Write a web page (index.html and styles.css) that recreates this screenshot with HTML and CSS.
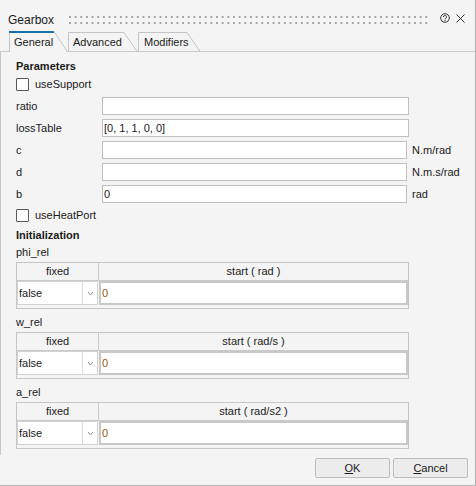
FILE: index.html
```html
<!DOCTYPE html>
<html>
<head>
<meta charset="utf-8">
<title>Gearbox</title>
<link rel="stylesheet" href="styles.css">
</head>
<body>
<div class="window">
  <div class="titlebar">
    <span class="title">Gearbox</span>
    <span class="grip"></span>
    <svg class="help" width="10" height="10" viewBox="0 0 10 10">
      <circle cx="5" cy="5" r="4.3" fill="none" stroke="#333" stroke-width="1"/>
      <path d="M3.5 4.1 A1.5 1.5 0 1 1 5.6 5.3 C5.1 5.6 5 5.9 5 6.4" fill="none" stroke="#333" stroke-width="1"/>
      <circle cx="5" cy="7.6" r="0.6" fill="#333"/>
    </svg>
    <svg class="close" width="9" height="9" viewBox="0 0 9 9">
      <path d="M0.5 0.5 L8.5 8.5 M8.5 0.5 L0.5 8.5" stroke="#333" stroke-width="1"/>
    </svg>
  </div>

  <div class="tabstrip">
    <span class="tab-gap"></span>
    <div class="tab tab-general">
      <svg class="tab-shape" width="59" height="21" viewBox="0 0 59 21">
        <path d="M0.5 21 V1" stroke="#c4c4c4" fill="none"/>
        <rect x="0" y="0" width="45" height="2" fill="#1570a8"/>
        <path d="M45 0.5 L58.5 21" stroke="#c4c4c4" fill="none"/>
      </svg>
      <span class="tab-label">General</span>
    </div>
    <div class="tab tab-advanced">
      <svg class="tab-shape" width="70" height="21" viewBox="0 0 70 21">
        <path d="M0 20.5 H70" stroke="#c8c8c8" fill="none"/>
        <path d="M0.5 21 V1.5 H56 L69.5 21" stroke="#c4c4c4" fill="none"/>
      </svg>
      <span class="tab-label">Advanced</span>
    </div>
    <div class="tab tab-modifiers">
      <svg class="tab-shape" width="63" height="21" viewBox="0 0 63 21">
        <path d="M0 20.5 H63" stroke="#c8c8c8" fill="none"/>
        <path d="M0.5 21 V1.5 H49 L62.5 21" stroke="#c4c4c4" fill="none"/>
      </svg>
      <span class="tab-label tab-label-m">Modifiers</span>
    </div>
    <span class="tab-fill"></span>
  </div>

  <div class="panel">
    <div class="section-title">Parameters</div>
    <div class="check-row"><span class="checkbox"></span><span>useSupport</span></div>

    <div class="params">
      <span class="param-label">ratio</span>
      <span class="param-input wide"></span>

      <span class="param-label">lossTable</span>
      <span class="param-input wide">[0, 1, 1, 0, 0]</span>

      <span class="param-label">c</span>
      <span class="param-input"></span>
      <span class="param-unit">N.m/rad</span>

      <span class="param-label">d</span>
      <span class="param-input"></span>
      <span class="param-unit">N.m.s/rad</span>

      <span class="param-label">b</span>
      <span class="param-input">0</span>
      <span class="param-unit">rad</span>
    </div>

    <div class="check-row check-heat"><span class="checkbox"></span><span>useHeatPort</span></div>

    <div class="section-title section-init">Initialization</div>

    <div class="init-label first">phi_rel</div>
    <div class="ptable">
      <div class="thead"><div class="th th-fixed">fixed</div><div class="th th-start">start ( rad )</div></div>
      <div class="trow">
        <div class="combo"><span class="combo-text">false</span><span class="combo-btn"><svg width="5" height="3" viewBox="0 0 5 3"><path d="M0 0 L2.5 3 L5 0" fill="none" stroke="#8c8c8c" stroke-width="1"/></svg></span></div>
        <div class="cell-input">0</div>
      </div>
    </div>

    <div class="init-label">w_rel</div>
    <div class="ptable">
      <div class="thead"><div class="th th-fixed">fixed</div><div class="th th-start">start ( rad/s )</div></div>
      <div class="trow">
        <div class="combo"><span class="combo-text">false</span><span class="combo-btn"><svg width="5" height="3" viewBox="0 0 5 3"><path d="M0 0 L2.5 3 L5 0" fill="none" stroke="#8c8c8c" stroke-width="1"/></svg></span></div>
        <div class="cell-input">0</div>
      </div>
    </div>

    <div class="init-label">a_rel</div>
    <div class="ptable">
      <div class="thead"><div class="th th-fixed">fixed</div><div class="th th-start">start ( rad/s2 )</div></div>
      <div class="trow">
        <div class="combo"><span class="combo-text">false</span><span class="combo-btn"><svg width="5" height="3" viewBox="0 0 5 3"><path d="M0 0 L2.5 3 L5 0" fill="none" stroke="#8c8c8c" stroke-width="1"/></svg></span></div>
        <div class="cell-input">0</div>
      </div>
    </div>
  </div>

  <div class="footer">
    <button class="btn"><u>O</u>K</button>
    <button class="btn"><u>C</u>ancel</button>
  </div>
</div>
</body>
</html>
```

FILE: styles.css
```css
* { box-sizing: border-box; }
html, body { margin: 0; padding: 0; }
body {
  width: 476px;
  height: 486px;
  overflow: hidden;
  background: #f4f4f4;
  font-family: "Liberation Sans", Arial, sans-serif;
  font-size: 11px;
  color: #1a1a1a;
}
.window {
  width: 476px;
  height: 486px;
  background: #f4f4f4;
  border-right: 1px solid #b5b5b5;
  border-bottom: 1px solid #b5b5b5;
  display: flex;
  flex-direction: column;
}

/* title bar */
.titlebar {
  flex: none;
  height: 31px;
  display: flex;
  align-items: flex-start;
  padding-left: 8px;
}
.title {
  font-size: 12px;
  line-height: 14px;
  margin-top: 13px;
}
.grip {
  flex: 1;
  height: 8px;
  margin: 16px 0 0 15px;
  background:
    linear-gradient(90deg, #a3a3a3 2px, transparent 2px) 0 0 / 5.66px 2px repeat-x,
    linear-gradient(90deg, #a3a3a3 2px, transparent 2px) 0 6px / 5.66px 2px repeat-x;
}
.help { flex: none; margin: 13px 0 0 9px; }
.close { flex: none; margin: 14px 10px 0 6px; }

/* tabs */
.tabstrip {
  flex: none;
  height: 21px;
  display: flex;
}
.tab-gap { width: 9px; border-bottom: 1px solid #c8c8c8; }
.tab-fill { flex: 1; border-bottom: 1px solid #c8c8c8; }
.tab { position: relative; flex: none; height: 21px; }
.tab-general { width: 59px; }
.tab-advanced { width: 70px; }
.tab-modifiers { width: 63px; }
.tab-shape { position: absolute; left: 0; top: 0; }
.tab-label {
  position: relative;
  display: block;
  padding: 5px 0 0 5px;
  line-height: 13px;
}
.tab-label-m { padding-left: 6px; }

/* panel */
.panel {
  flex: 1;
  border-left: 1px solid #c8c8c8;
  padding: 8px 0 0 15px;
}
.section-title {
  font-weight: bold;
  line-height: 13px;
  height: 13px;
}
.section-init { margin-top: 7px; }
.check-row {
  display: flex;
  align-items: center;
  gap: 6px;
  height: 13px;
  line-height: 13px;
  margin-top: 5px;
}
.check-heat { margin-top: 6px; }
.checkbox {
  width: 13px;
  height: 13px;
  border: 1px solid #5a5a5a;
  background: #fff;
  border-radius: 1px;
}

.params {
  display: grid;
  grid-template-columns: 86px 305px auto;
  row-gap: 4px;
  margin-top: 6px;
}
.param-label { grid-column: 1; line-height: 18px; }
.param-input {
  height: 18px;
  width: 305px;
  border: 1px solid #c0c0c0;
  background: #fff;
  line-height: 16px;
  padding-left: 1px;
  white-space: nowrap;
}
.param-input.wide { width: 307px; }
.param-unit { line-height: 18px; padding-left: 5px; white-space: nowrap; }

.init-label { line-height: 13px; height: 13px; margin-top: 7px; }
.init-label.first { margin-top: 4px; }

.ptable {
  width: 393px;
  height: 47px;
  margin-top: 3px;
  border: 1px solid #c6c6c6;
}
.thead {
  display: flex;
  height: 18px;
  border-bottom: 1px solid #cacaca;
}
.th { line-height: 17px; text-align: center; }
.th-fixed { width: 82px; border-right: 1px solid #cacaca; }
.th-start { flex: 1; }
.trow { display: flex; gap: 1px; height: 24px; }
.combo {
  width: 81px;
  display: flex;
  background: #fff;
  border: 1px solid #d2d2d2;
}
.combo-text { flex: 1; padding: 1px 0 0 1px; line-height: 21px; }
.combo-btn {
  width: 15px;
  border-left: 1px solid #dadada;
  display: flex;
  align-items: center;
  justify-content: center;
}
.cell-input {
  flex: 1;
  background: #fff;
  border: 2px solid #c8c8c8;
  padding-left: 1px;
  line-height: 20px;
  color: #8f5710;
}

/* footer */
.footer {
  flex: none;
  height: 30px;
  display: flex;
  justify-content: flex-end;
  align-items: flex-start;
  gap: 3px;
  padding: 3px 7px 0 0;
}
.btn {
  width: 75px;
  height: 20px;
  padding: 0;
  border: 1px solid #bdbdbd;
  border-radius: 2px;
  background: #ececec;
  font-family: "Liberation Sans", Arial, sans-serif;
  font-size: 11px;
  line-height: 18px;
  color: #1a1a1a;
  text-align: center;
}
```
